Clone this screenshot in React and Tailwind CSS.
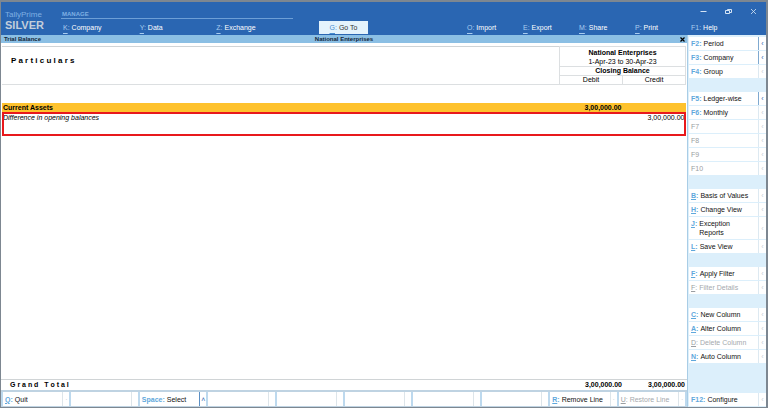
import React from 'react';
import clsx from 'clsx';

const leftMenu = [
  { hotkey: 'K', label: 'Company' },
  { hotkey: 'Y', label: 'Data' },
  { hotkey: 'Z', label: 'Exchange' },
];

const rightMenu = [
  { hotkey: 'O', label: 'Import' },
  { hotkey: 'E', label: 'Export' },
  { hotkey: 'M', label: 'Share' },
  { hotkey: 'P', label: 'Print' },
];

const sideGroups = [
  [
    { hotkey: 'F2', label: 'Period', active: true },
    { hotkey: 'F3', label: 'Company', active: true },
    { hotkey: 'F4', label: 'Group' },
  ],
  [
    { hotkey: 'F5', label: 'Ledger-wise', active: true },
    { hotkey: 'F6', label: 'Monthly' },
    { hotkey: 'F7', disabled: true },
    { hotkey: 'F8', disabled: true },
    { hotkey: 'F9', disabled: true },
    { hotkey: 'F10', disabled: true },
  ],
  [
    { hotkey: 'B', label: 'Basis of Values', underline: true },
    { hotkey: 'H', label: 'Change View', underline: true },
    { hotkey: 'J', label: 'Exception Reports', underline: true, tall: true },
    { hotkey: 'L', label: 'Save View', underline: true },
  ],
  [
    { hotkey: 'F', label: 'Apply Filter', underline: true },
    { hotkey: 'F', label: 'Filter Details', underline: true, disabled: true },
  ],
  [
    { hotkey: 'C', label: 'New Column', underline: true },
    { hotkey: 'A', label: 'Alter Column', underline: true },
    { hotkey: 'D', label: 'Delete Column', underline: true, disabled: true },
    { hotkey: 'N', label: 'Auto Column', underline: true },
  ],
];

const footerItems = [
  { hotkey: 'Q', label: 'Quit', underline: true },
  null,
  { hotkey: 'Space', label: 'Select', active: true },
  null,
  null,
  null,
  null,
  null,
  { hotkey: 'R', label: 'Remove Line', underline: true },
  { hotkey: 'U', label: 'Restore Line', underline: true, disabled: true },
];

const MenuButton = ({ hotkey, label }) => (
  <button className="text-left whitespace-nowrap text-white">
    <span className="text-[#a9cdf0] underline underline-offset-3">{hotkey}</span>
    <span className="text-[#a9cdf0]">:</span> {label}
  </button>
);

const Hotkey = ({ item }) => (
  <span className={clsx('shrink-0', item.disabled ? 'text-[#9a9ea2]' : 'font-bold text-[#5fa8dc]')}>
    <span className={clsx(item.underline && 'underline underline-offset-1')}>{item.hotkey}</span>
    {item.label && ':'}
  </span>
);

const SideButton = ({ item }) => (
  <button
    disabled={item.disabled}
    className={clsx(
      'flex w-full bg-white text-left leading-[9px]',
      item.tall ? 'h-[22px]' : 'h-[13px]',
      item.disabled ? 'text-[#a5a9ad]' : 'text-[#111]'
    )}
  >
    <span className="flex flex-1 gap-[2px] self-center pl-[2px]">
      <Hotkey item={item} />
      <span className={clsx(item.tall ? 'w-[40px]' : 'whitespace-nowrap')}>{item.label}</span>
    </span>
    <span
      className={clsx(
        'flex w-[8px] items-center justify-center self-stretch border-l',
        item.active ? 'border-[#7fa9d0] text-[#2a67b1]' : 'border-[#dde9f1] text-[#c3ced6]'
      )}
    >
      ‹
    </span>
  </button>
);

const FooterButton = ({ item }) => (
  <button
    disabled={!item || item.disabled}
    className={clsx(
      'flex h-[14px] min-w-0 flex-1 items-center bg-white leading-[9px]',
      item?.disabled ? 'text-[#a5a9ad]' : 'text-[#111]'
    )}
  >
    <span className="flex flex-1 gap-[2px] pl-[2px] whitespace-nowrap">
      {item && <Hotkey item={item} />}
      {item && <span>{item.label}</span>}
    </span>
    <span
      className={clsx(
        'flex w-[7px] items-center justify-center self-stretch border-l',
        item?.active ? 'border-[#5b8fc4] text-[#2a67b1]' : 'border-[#dde5ea] text-[#c3ced6]'
      )}
    >
      {item && (item.active ? '˄' : '·')}
    </span>
  </button>
);

const Header = () => (
  <header className="flex h-[33px] bg-[#2a66b2]">
    <div className="w-[60px] shrink-0 pt-[8px] pl-[4px]">
      <div className="text-[8px] leading-[9px] text-[#7fb0e3]">TallyPrime</div>
      <div className="text-[11px] leading-[13px] font-bold text-[#c3cedb]">SILVER</div>
    </div>
    <div className="flex-1">
      <div className="flex h-[17px] justify-between">
        <div className="w-[232px] border-b border-[#6d9fd6] pt-[8px] pl-[1px] text-[6px] leading-[8px] font-bold text-[#7fb0e3]">
          MANAGE
        </div>
        <div className="flex w-[66px] gap-[18px] pt-[2px] text-[#d5e4f5]">
          <button aria-label="Minimize">
            <svg width="7" height="7" viewBox="0 0 7 7" fill="none" stroke="currentColor">
              <path d="M0.5 3.5h6" />
            </svg>
          </button>
          <button aria-label="Restore">
            <svg width="7" height="7" viewBox="0 0 7 7" fill="none" stroke="currentColor">
              <path d="M0.5 2.5h4v3h-4zM2.5 2.5v-1h4v3h-2" />
            </svg>
          </button>
          <button aria-label="Close">
            <svg width="7" height="7" viewBox="0 0 7 7" fill="none" stroke="currentColor" strokeWidth="0.8">
              <path d="M1 1l5 5M6 1l-5 5" />
            </svg>
          </button>
        </div>
      </div>
      <div className="flex h-[16px] items-center">
        <nav className="grid w-[232px] grid-cols-3 pl-[2px]">
          {leftMenu.map((item) => (
            <MenuButton key={item.hotkey} {...item} />
          ))}
        </nav>
        <button className="ml-[26px] h-[13px] w-[49px] bg-[#e4f3fc] text-[#333]">
          <span className="text-[#4a8fd0] underline underline-offset-3">G</span>
          <span className="text-[#4a8fd0]">:</span> Go To
        </button>
        <nav className="ml-auto flex">
          {rightMenu.map((item) => (
            <div key={item.hotkey} className="flex w-[56px]">
              <MenuButton {...item} />
            </div>
          ))}
          <button className="w-[75px] text-left text-white">
            <span className="text-[#a9cdf0]">F1:</span> Help
          </button>
        </nav>
      </div>
    </div>
  </header>
);

const TrialBalance = () => (
  <main className="flex flex-1 flex-col bg-white text-black">
    <div className="grid h-[8px] grid-cols-3 bg-[#8bbfe4] text-[6px] leading-[8px] font-bold text-[#12263a]">
      <span className="pl-[3px]">Trial Balance</span>
      <span className="text-center">National Enterprises</span>
      <button aria-label="Close report" className="flex items-center justify-self-end pr-[2px] text-black">
        <svg width="5" height="5" viewBox="0 0 5 5" stroke="currentColor" strokeWidth="1.2">
          <path d="M0.5 0.5l4 4M4.5 0.5l-4 4" />
        </svg>
      </button>
    </div>

    <div className="px-px pt-[3px]">
      <table className="w-full table-fixed border-collapse leading-[9px]">
        <colgroup>
          <col />
          <col className="w-[63px]" />
          <col className="w-[63px]" />
        </colgroup>
        <thead className="leading-[8px]">
          <tr className="h-[20px] border-t border-[#d0d4d6]">
            <th rowSpan={3} className="border-b border-[#dcdfe1] pt-[10px] pl-[9px] text-left align-top text-[8px]">
              P a r t i c u l a r s
            </th>
            <th colSpan={2} className="border border-[#dcdfe1] leading-[9px]">
              National Enterprises
              <div className="font-normal">1-Apr-23 to 30-Apr-23</div>
            </th>
          </tr>
          <tr>
            <th colSpan={2} className="border border-[#dcdfe1]">Closing Balance</th>
          </tr>
          <tr>
            <th className="border border-[#dcdfe1] font-normal">Debit</th>
            <th className="border border-[#dcdfe1] font-normal">Credit</th>
          </tr>
        </thead>
        <tbody>
          <tr className="h-[18px]">
            <td colSpan={3} />
          </tr>
          <tr className="h-[9px] bg-[#fec22d] font-bold">
            <td className="pl-[1px]">Current Assets</td>
            <td className="pr-[1px] text-right">3,00,000.00</td>
            <td />
          </tr>
          <tr className="h-[24px] align-top outline-2 -outline-offset-2 outline-[#e8191c]">
            <td className="pt-[1px] pl-[1px] italic">Difference in opening balances</td>
            <td />
            <td className="pt-[1px] pr-[1px] text-right">3,00,000.00</td>
          </tr>
        </tbody>
      </table>
    </div>

    <div className="mt-auto border-t border-[#d0d4d6] px-px">
      <table className="w-full table-fixed font-bold">
        <tbody>
          <tr className="h-[10px] leading-[10px]">
            <th className="pl-[8px] text-left">G r a n d&nbsp;&nbsp;&nbsp;T o t a l</th>
            <td className="w-[63px] pr-[1px] text-right">3,00,000.00</td>
            <td className="w-[63px] pr-[1px] text-right">3,00,000.00</td>
          </tr>
        </tbody>
      </table>
    </div>

    <footer className="flex gap-[2px] border-t-2 border-b border-[#bfd3e2] bg-[#bdd9ee] px-[2px]">
      {footerItems.map((item, index) => (
        <FooterButton key={index} item={item} />
      ))}
    </footer>
  </main>
);

const App = () => {
  return (
    <div className="flex min-h-screen flex-col border-t-2 border-r-2 border-b border-l border-[#7d8791] font-['Liberation_Sans',Arial,sans-serif] text-[7px] leading-[9px]">
      <Header />
      <div className="flex flex-1">
        <TrialBalance />
        <aside className="flex w-[79px] shrink-0 flex-col gap-[14px] border-l border-[#a9cde6] bg-[#dceffb] pt-[2px] pb-[1px] pl-[1px]">
          {sideGroups.map((group, index) => (
            <div key={index} className="flex flex-col gap-px">
              {group.map((item) => (
                <SideButton key={item.hotkey + item.label} item={item} />
              ))}
            </div>
          ))}
          <div className="mt-auto">
            <SideButton item={{ hotkey: 'F12', label: 'Configure' }} />
          </div>
        </aside>
      </div>
    </div>
  );
};

export default App;
